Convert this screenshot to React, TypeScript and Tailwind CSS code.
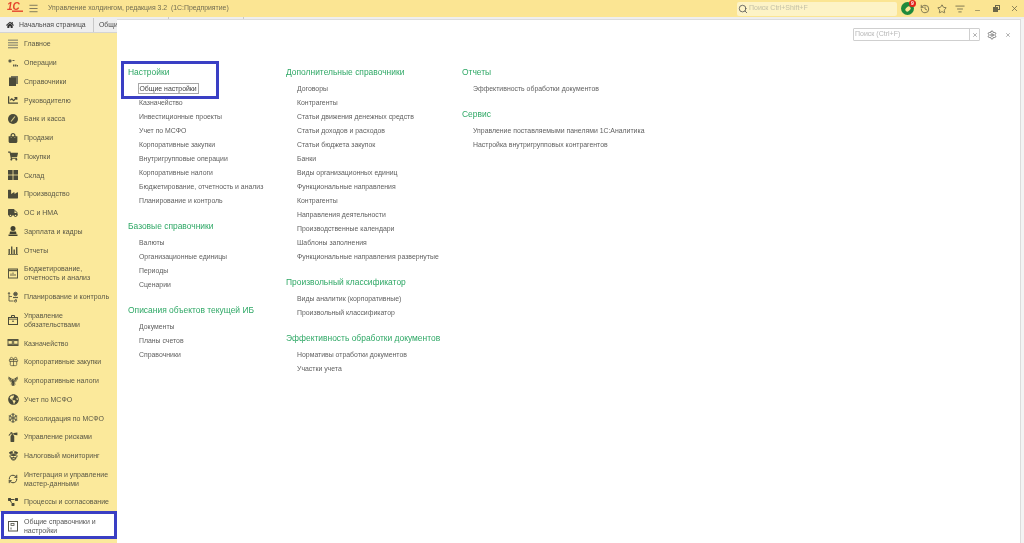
import React from "react";
import {
  FaChartLine,
  FaShoppingBag,
  FaShoppingCart,
  FaIndustry,
  FaTruck,
  FaHome,
  FaGlobeAmericas,
  FaSnowflake,
  FaFireExtinguisher,
  FaProjectDiagram,
} from "react-icons/fa";
import { GiEagleEmblem, GiPoliceOfficerHead } from "react-icons/gi";
import { Search, History, Star, Minus, X, Settings, Menu, Gift, RefreshCw, ListFilter } from "lucide-react";

type NavItem = { label: string; icon: React.ReactNode; tall?: boolean };

const fa = "w-[10px] h-[10px] text-[#4b4b3a]";
const ic = "w-[12px] h-[12px] text-[#4b4b3a]";

const navItems: NavItem[] = [
  {
    label: "Главное",
    icon: (
      <svg viewBox="0 0 12 12" className={ic} fill="#9c9878">
        <rect x="1" y="1.5" width="10" height="1.4" />
        <rect x="1" y="4" width="10" height="1.4" />
        <rect x="1" y="6.5" width="10" height="1.4" />
        <rect x="1" y="9" width="10" height="1.4" />
      </svg>
    ),
  },
  {
    label: "Операции",
    icon: (
      <svg viewBox="0 0 12 12" className={ic} fill="#5d5c48">
        <rect x="1.5" y="2.5" width="3" height="3" rx="1" />
        <rect x="5.5" y="3" width="2" height="1" />
        <rect x="6" y="7.5" width="1.5" height="2" />
        <rect x="8" y="7.5" width="1.5" height="2" />
        <rect x="10" y="8" width="1" height="1.5" />
      </svg>
    ),
  },
  {
    label: "Справочники",
    icon: (
      <svg viewBox="0 0 12 12" className={ic} fill="#4b4b3a">
        <rect x="4" y="1" width="7" height="8" fill="#77745c" />
        <rect x="2" y="2.5" width="7" height="8.5" />
      </svg>
    ),
  },
  { label: "Руководителю", icon: <FaChartLine className={fa} /> },
  {
    label: "Банк и касса",
    icon: (
      <svg viewBox="0 0 12 12" className={ic}>
        <circle cx="6" cy="6" r="5" fill="#4b4b3a" />
        <path d="M4 8.5 L8 3.5" stroke="#d8cc86" strokeWidth="1.2" />
      </svg>
    ),
  },
  { label: "Продажи", icon: <FaShoppingBag className={fa} /> },
  { label: "Покупки", icon: <FaShoppingCart className={fa} /> },
  {
    label: "Склад",
    icon: (
      <svg viewBox="0 0 12 12" className={ic} fill="#4b4b3a">
        <rect x="1" y="1" width="4.6" height="4.6" />
        <rect x="6.4" y="1" width="4.6" height="4.6" />
        <rect x="1" y="6.4" width="4.6" height="4.6" />
        <rect x="6.4" y="6.4" width="4.6" height="4.6" />
      </svg>
    ),
  },
  { label: "Производство", icon: <FaIndustry className={fa} /> },
  { label: "ОС и НМА", icon: <FaTruck className={fa} /> },
  {
    label: "Зарплата и кадры",
    icon: (
      <svg viewBox="0 0 12 12" className={ic} fill="#3f3f30">
        <circle cx="6" cy="3.5" r="2.5" />
        <path d="M3 6.5 H9 L9.5 9 H2.5 Z" />
        <rect x="1.5" y="9.5" width="9" height="1.5" />
      </svg>
    ),
  },
  {
    label: "Отчеты",
    icon: (
      <svg viewBox="0 0 12 12" className={ic} fill="#55543f">
        <rect x="1.5" y="5" width="1.4" height="5" />
        <rect x="4" y="2.5" width="1.4" height="7.5" />
        <rect x="6.5" y="5.5" width="1.4" height="4.5" />
        <rect x="9" y="3" width="1.4" height="7" />
        <rect x="1" y="10" width="10" height="0.8" />
      </svg>
    ),
  },
  {
    label: "Бюджетирование, отчетность и анализ",
    icon: (
      <svg viewBox="0 0 12 12" className={ic} fill="none" stroke="#55543f">
        <rect x="1.5" y="2" width="9" height="9" strokeWidth="1" />
        <path d="M1.5 3.5 H10.5" strokeWidth="1.4" />
        <path d="M4 9 V6.5 M6 9 V5.5 M8 9 V7" strokeWidth="0.9" />
      </svg>
    ),
    tall: true,
  },
  {
    label: "Планирование и контроль",
    icon: (
      <svg viewBox="0 0 12 12" className={ic} fill="none" stroke="#5d5c48" strokeWidth="0.9">
        <circle cx="8.5" cy="3" r="1.8" fill="#5d5c48" />
        <path d="M6 6.5 H11" strokeWidth="1.2" />
        <path d="M2 1.5 V10 H6.5 M1 3 L2 1.5 L3 3 M2 5.5 H5 M9 8 V10" />
        <circle cx="8.5" cy="10" r="1.1" />
      </svg>
    ),
  },
  {
    label: "Управление обязательствами",
    icon: (
      <svg viewBox="0 0 12 12" className={ic} fill="none" stroke="#4b4b3a" strokeWidth="1">
        <rect x="1.5" y="3.5" width="9" height="7" />
        <path d="M4.5 3.5 V1.5 H7.5 V3.5" />
        <path d="M1.5 5.2 H10.5" strokeWidth="0.8" />
        <rect x="5.3" y="6.6" width="1.4" height="1.4" fill="#4b4b3a" stroke="none" />
      </svg>
    ),
    tall: true,
  },
  {
    label: "Казначейство",
    icon: (
      <svg viewBox="0 0 12 12" className={ic} fill="#55543f">
        <rect x="0.5" y="2" width="11" height="1.6" />
        <rect x="1" y="3.6" width="4.3" height="3.6" fill="none" stroke="#55543f" strokeWidth="0.9" />
        <rect x="6.7" y="3.6" width="4.3" height="3.6" fill="none" stroke="#55543f" strokeWidth="0.9" />
        <rect x="0.5" y="7.4" width="11" height="1.6" />
      </svg>
    ),
  },
  { label: "Корпоративные закупки", icon: <Gift className="w-[11px] h-[11px] text-[#55543f]" strokeWidth={1.6} /> },
  { label: "Корпоративные налоги", icon: <GiEagleEmblem className={fa} /> },
  { label: "Учет по МСФО", icon: <FaGlobeAmericas className="w-[11px] h-[11px] text-[#4b4b3a]" /> },
  { label: "Консолидация по МСФО", icon: <FaSnowflake className="w-[10px] h-[10px] text-[#6b6a52]" /> },
  { label: "Управление рисками", icon: <FaFireExtinguisher className={fa} /> },
  { label: "Налоговый мониторинг", icon: <GiPoliceOfficerHead className="w-[11px] h-[11px] text-[#4b4b3a]" /> },
  {
    label: "Интеграция и управление мастер-данными",
    icon: <RefreshCw className="w-[10px] h-[10px] text-[#4b4b3a]" strokeWidth={2.4} />,
    tall: true,
  },
  { label: "Процессы и согласование", icon: <FaProjectDiagram className={fa} /> },
];

type Group = { title: string; items: string[] };

const col1: Group[] = [
  {
    title: "Настройки",
    items: [
      "Общие настройки",
      "Казначейство",
      "Инвестиционные проекты",
      "Учет по МСФО",
      "Корпоративные закупки",
      "Внутригрупповые операции",
      "Корпоративные налоги",
      "Бюджетирование, отчетность и анализ",
      "Планирование и контроль",
    ],
  },
  { title: "Базовые справочники", items: ["Валюты", "Организационные единицы", "Периоды", "Сценарии"] },
  { title: "Описания объектов текущей ИБ", items: ["Документы", "Планы счетов", "Справочники"] },
];

const col2: Group[] = [
  {
    title: "Дополнительные справочники",
    items: [
      "Договоры",
      "Контрагенты",
      "Статьи движения денежных средств",
      "Статьи доходов и расходов",
      "Статьи бюджета закупок",
      "Банки",
      "Виды организационных единиц",
      "Функциональные направления",
      "Контрагенты",
      "Направления деятельности",
      "Производственные календари",
      "Шаблоны заполнения",
      "Функциональные направления развернутые",
    ],
  },
  { title: "Произвольный классификатор", items: ["Виды аналитик (корпоративные)", "Произвольный классификатор"] },
  { title: "Эффективность обработки документов", items: ["Нормативы отработки документов", "Участки учета"] },
];

const col3: Group[] = [
  { title: "Отчеты", items: ["Эффективность обработки документов"] },
  {
    title: "Сервис",
    items: ["Управление поставляемыми панелями 1С:Аналитика", "Настройка внутригрупповых контрагентов"],
  },
];

const Column: React.FC<{ groups: Group[]; className: string }> = ({ groups, className }) => (
  <div className={`flex flex-col gap-[8px] ${className}`}>
    {groups.map((g) => (
      <div key={g.title}>
        <div className="h-[20px] leading-[20px] text-[8.45px] text-[#2fa866] whitespace-nowrap">{g.title}</div>
        <ul className="pl-[11px]">
          {g.items.map((item) => (
            <li key={item} className="h-[14px] leading-[14px] text-[6.9px] text-[#5f5f5f] whitespace-nowrap">
              {item === "Общие настройки" ? (
                <span className="inline-block -ml-[1.5px] h-[11px] leading-[9px] px-[1px] border border-[#a8a8a8] text-[#444]">
                  {item}
                </span>
              ) : (
                item
              )}
            </li>
          ))}
        </ul>
      </div>
    ))}
  </div>
);

export default function App() {
  return (
    <div className="relative w-[1024px] h-[543px] overflow-hidden flex flex-col bg-white blur-[0.4px] font-['Liberation_Sans',sans-serif]">
      {/* Top bar */}
      <header className="h-[17px] shrink-0 flex items-center bg-[#fbe593] text-[#6b6648]">
        <div className="w-[28px] relative h-full">
          <span className="absolute left-[7px] top-[1px] text-[10px] leading-[12px] font-bold italic text-[#e4432d]">1С</span>
          <svg className="absolute left-[12px] top-[9px] w-[11px] h-[3px]" viewBox="0 0 11 3">
            <path d="M0 2.2 H11" stroke="#e4432d" strokeWidth="1.4" />
          </svg>
        </div>
        <Menu className="w-[11px] h-[11px] text-[#77735a]" />
        <div className="ml-[9px] w-[660px] text-[6.9px] whitespace-pre text-[#716c52]">
          Управление холдингом, редакция 3.2  (1С:Предприятие)
        </div>
        <div className="ml-[29px] w-[160px] h-[14px] bg-[#fdf3c6] rounded-[2px] flex items-center pl-[1px] gap-[1px]">
          <Search className="w-[10px] h-[10px] text-[#555]" />
          <span className="text-[7px] text-[#c4c0a6]">Поиск Ctrl+Shift+F</span>
        </div>
        <div className="relative ml-[4px] w-[13px] h-[13px] rounded-full bg-[#1f8a3c] flex items-center justify-center">
          <span className="w-[6px] h-[4px] rounded-full bg-[#fbe593] -rotate-45" />
          <span className="absolute -right-[2px] -top-[2px] w-[7px] h-[7px] rounded-full bg-[#e2231a] text-[5px] leading-[7px] text-white text-center font-bold">
            9
          </span>
        </div>
        <History className="ml-[6px] w-[10px] h-[10px]" />
        <Star className="ml-[7px] w-[10px] h-[10px]" />
        <ListFilter className="ml-[8px] w-[10px] h-[10px]" />
        <Minus className="ml-[9px] mt-[4px] w-[7px] h-[7px]" />
        <div className="ml-[12px] relative w-[7px] h-[7px]">
          <div className="absolute right-0 top-0 w-[5px] h-[5px] border border-[#6b6648]" />
          <div className="absolute left-0 bottom-0 w-[5px] h-[5px] border border-[#6b6648] bg-[#6b6648]" />
        </div>
        <X className="ml-[10px] w-[9px] h-[9px]" />
      </header>

      <div className="flex-1 min-h-0 flex">
        {/* Left column with tabs and section list */}
        <div className="w-[117px] shrink-0 flex flex-col">
          <div className="h-[16px] shrink-0 flex bg-[#eeeeee] pt-[1px] text-[6.9px] text-[#4a4a4a] border-b border-[#d4d4d4]">
            <div className="w-[94px] shrink-0 flex items-center pl-[6px] gap-[5px] border-r border-[#c8c8c8] whitespace-nowrap">
              <FaHome className="w-[8px] h-[8px] text-[#333]" />
              Начальная страница
            </div>
            <div className="pl-[5px] flex items-center">Общи</div>
          </div>
          <nav className="flex-1 bg-[#fbe99b] pt-[1.5px] text-[7px] leading-[9px] text-[#5a5846]">
            {navItems.map((n) => (
              <div key={n.label} className={`flex items-center ${n.tall ? "h-[27.7px]" : "h-[18.75px]"}`}>
                <span className="w-[24px] shrink-0 flex justify-center pl-[2px]">{n.icon}</span>
                <span className="w-[88px]">{n.label}</span>
              </div>
            ))}
            <div className="h-[27px] mt-[1px] flex items-center bg-white">
              <span className="w-[24px] shrink-0 flex justify-center pl-[2px]">
                <svg viewBox="0 0 12 12" className="w-[12px] h-[12px]" fill="none" stroke="#55554a">
                  <rect x="1.5" y="1.5" width="9" height="9.5" strokeWidth="1" />
                  <rect x="4" y="3.5" width="3" height="2" strokeWidth="0.8" />
                  <path d="M4 7.5 V9.5" strokeWidth="0.9" />
                </svg>
              </span>
              <span className="w-[88px] text-[#555]">Общие справочники и настройки</span>
            </div>
          </nav>
        </div>

        {/* Content panel */}
        <main className="flex-1 min-w-0 flex flex-col">
          <div className="h-[2px] shrink-0 flex bg-[#eeeeee]">
            <div className="w-[52px] border-r border-[#c8c8c8]" />
            <div className="w-[75px] border-r border-[#c8c8c8]" />
          </div>
          <div className="flex-1 flex bg-[#f3f3f3]">
            <div className="flex-1 bg-white border-t border-r border-[#dcdcdc]">
              <div className="flex items-center justify-end pt-[8px] pr-[9px] h-[21px]">
                <div className="w-[127px] h-[13px] border border-[#cfcfcf] rounded-[1px] flex items-center text-[7px] text-[#b8b8b8]">
                  <span className="flex-1 pl-[1px]">Поиск (Ctrl+F)</span>
                  <span className="w-[10px] h-full border-l border-[#cfcfcf] flex items-center justify-center">
                    <X className="w-[6px] h-[6px] text-[#666]" />
                  </span>
                </div>
                <Settings className="ml-[7px] w-[10px] h-[10px] text-[#666]" />
                <X className="ml-[8px] w-[6px] h-[6px] text-[#666]" />
              </div>
              <div className="flex pl-[11px] pt-[21px]">
                <Column groups={col1} className="w-[158px]" />
                <Column groups={col2} className="w-[176px]" />
                <Column groups={col3} className="w-[230px]" />
              </div>
            </div>
            <div className="w-[3px]" />
          </div>
        </main>
      </div>

      {/* Blue annotation frames */}
      <div className="absolute left-[121px] top-[61px] w-[98px] h-[38px] border-[3px] border-[#3a3fc4]" />
      <div className="absolute left-[1px] top-[511px] w-[116px] h-[28px] border-[3px] border-[#3a3fc4]" />
    </div>
  );
}
